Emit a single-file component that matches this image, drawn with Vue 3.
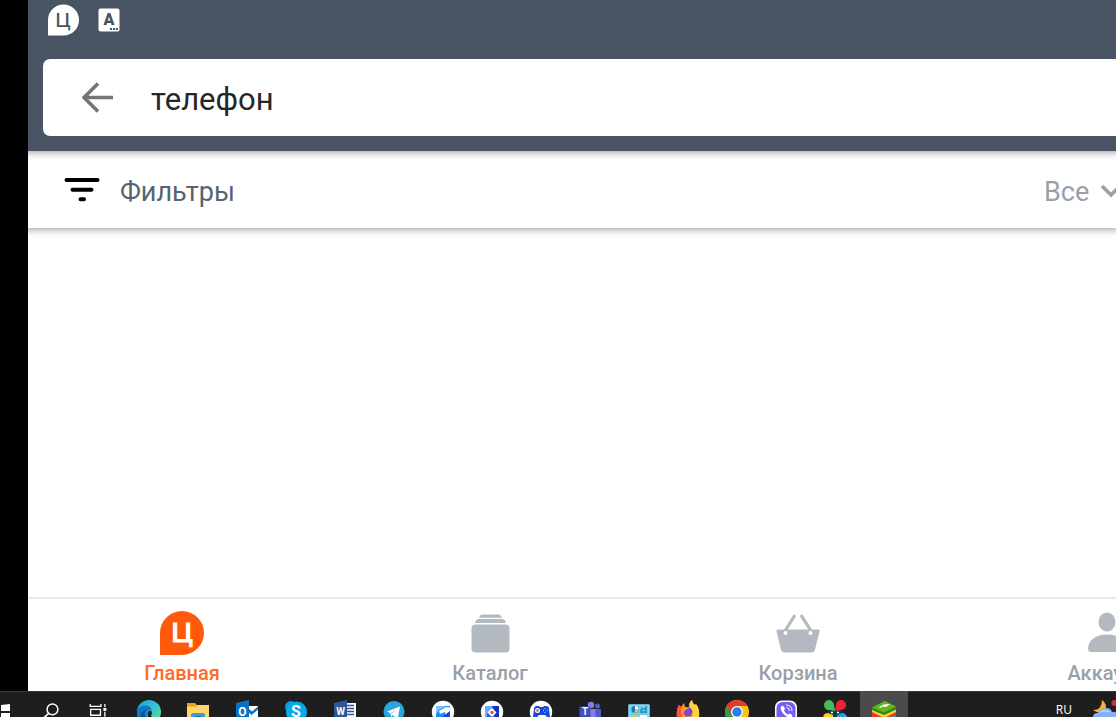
<template>
  <div class="screen">
    <div class="app">
      <header class="app-header">
        <div class="status-bar">
          <svg class="status-logo" viewBox="0 0 32 32" aria-hidden="true">
            <path d="M0 31.500V15.500A15.500 15.500 0 1 1 15.500 31.500Z" fill="#fff" />
            <text class="logo-letter logo-letter-dark" x="15" y="23" font-size="24">ц</text>
          </svg>
          <svg class="status-keyboard" viewBox="0 0 22 24" aria-hidden="true">
            <rect x="0.500" y="0.500" width="21" height="23" rx="2" fill="#fff" />
            <text class="keyboard-letter" x="11" y="17" font-size="16">A</text>
            <path d="M12 21h2m1 0h2m1 0h2" stroke="#485463" stroke-width="2" />
          </svg>
        </div>
        <form class="search" @submit.prevent>
          <button class="back" type="button" aria-label="Назад">
            <svg viewBox="0 0 32 32">
              <path d="M31 15.500H3M16 1.500l-14 14 14 14" fill="none" stroke="#757575" stroke-width="3.600" />
            </svg>
          </button>
          <input v-model="query" class="search-input" type="text" aria-label="Поиск">
        </form>
      </header>

      <div class="filters">
        <button class="filter-button" type="button">
          <svg class="filter-icon" viewBox="0 0 36 26">
            <path d="M2.500 3h31M8.500 12.700h19M16.500 22.300h3.500" fill="none" stroke="#000" stroke-width="4" stroke-linecap="round" />
          </svg>
          <span class="filter-label">Фильтры</span>
        </button>
        <label class="scope">
          <select v-model="scope" class="scope-select" aria-label="Раздел">
            <option>Все</option>
          </select>
          <svg class="scope-arrow" viewBox="0 0 16 16">
            <path d="M2 4l9 9 9-9" fill="none" stroke="#98a1aa" stroke-width="3.600" />
          </svg>
        </label>
      </div>

      <main class="results"></main>

      <nav class="tabs">
        <a v-for="tab in tabs" :key="tab.id" href="#" class="tab" :class="{ active: tab.id === current }" @click.prevent="current = tab.id">
          <svg v-if="tab.id === 'home'" class="tab-icon" viewBox="0 0 44 44">
            <path d="M0 44V22A22 22 0 1 1 22 44Z" fill="#ff5a0c" />
            <text class="logo-letter" x="22" y="31" font-size="34">ц</text>
          </svg>
          <svg v-else-if="tab.id === 'catalog'" class="tab-icon" viewBox="0 0 44 44" fill="#b3b9c1">
            <rect x="3.500" y="13.500" width="38" height="28" rx="4" />
            <path d="M7 12q1-4 4-4h23q3 0 4 4zM11 6.800q1-3.300 4-3.300h15q3 0 4 3.300z" />
          </svg>
          <svg v-else-if="tab.id === 'cart'" class="tab-icon" viewBox="0 0 44 44" fill="#b3b9c1">
            <path d="M19 4L9 20M25 4l10 16" stroke="#b3b9c1" stroke-width="3.200" />
            <path d="M2 18.500h40q2 0 1.500 2L39 38.500q-1 3-3.500 3h-27q-2.500 0-3.500-3L.500 20.500q-.5-2 1.500-2z" />
            <circle cx="9.500" cy="22" r="2" fill="#fff" />
            <circle cx="34.500" cy="22" r="2" fill="#fff" />
          </svg>
          <svg v-else class="tab-icon" viewBox="0 0 44 44" fill="#b3b9c1">
            <ellipse cx="23" cy="11" rx="8.500" ry="9.500" />
            <path d="M4 38C4 29 12 23.500 23 23.500S42 29 42 38q0 3-3 3H7q-3 0-3-3z" />
          </svg>
          <span class="tab-label">{{ tab.label }}</span>
        </a>
      </nav>
    </div>

    <footer class="taskbar">
      <div class="system">
        <button class="task start" type="button" aria-label="Пуск">
          <svg viewBox="0 0 28 26">
            <path d="M1 14l9-1v7H1zM1 22h9v4H1z" fill="#fff" />
          </svg>
        </button>
        <button class="task system-task" type="button" aria-label="Поиск">
          <svg viewBox="0 0 48 26">
            <circle cx="25" cy="18.500" r="5.500" fill="none" stroke="#fff" stroke-width="1.500" />
            <path d="M21 22.500L16.500 27" stroke="#fff" stroke-width="1.800" />
          </svg>
        </button>
        <button class="task system-task" type="button" aria-label="Представление задач">
          <svg viewBox="0 0 48 26" fill="none" stroke="#fff" stroke-width="1.300">
            <path d="M15.500 13v2.500h11V13M16 18.500h10v6H16zM30.500 13v3m0 5v5" />
            <path d="M29 17h3v3h-3z" fill="#fff" stroke="none" />
          </svg>
        </button>
      </div>

      <div class="pinned">
        <button class="task" type="button" aria-label="Edge">
          <svg viewBox="0 0 48 26">
            <defs>
              <linearGradient id="edge-top" x1="0" y1="0" x2="1" y2="1">
                <stop offset="0" stop-color="#199fdc" />
                <stop offset=".5" stop-color="#32c6d5" />
                <stop offset="1" stop-color="#6ce556" />
              </linearGradient>
            </defs>
            <circle cx="24" cy="21" r="12" fill="url(#edge-top)" />
            <path d="M12 20c1-4 5-6 9-5.500 4 .5 6 3 5.500 6-2-2.500-5-1-5 2.500 0 2 1 3 1 4h-9q-2-3-1.500-7z" fill="#1076c6" />
            <path d="M23 26q-1.500-5 1-6t3 1.500q0 2-1 3l1 1.500z" fill="#202020" />
            <path d="M16 26q-1-6 5-7-3 4-.5 7z" fill="#075398" />
          </svg>
        </button>
        <button class="task" type="button" aria-label="Проводник">
          <svg viewBox="0 0 48 26">
            <path d="M13 12h8l2 2h12v12H13z" fill="#e6a31b" />
            <path d="M13 15.500h9l1.500-1.500H35v12H13z" fill="#ffd869" />
            <path d="M17 26v-2q0-2 2-2h10q2 0 2 2v2z" fill="#3c9bdd" />
            <path d="M21 25h6v1h-6z" fill="#246aa3" />
          </svg>
        </button>
        <button class="task" type="button" aria-label="Outlook">
          <svg viewBox="0 0 48 26">
            <path d="M25 15h10v11H25z" fill="#fff" />
            <path d="M25 17l4 3.500 6-5v3L28.500 24 25 21z" fill="#0871c9" />
            <path d="M13 12l13-3v17H13z" fill="#0872c6" />
            <text class="glyph" x="19.500" y="25" font-size="12">O</text>
          </svg>
        </button>
        <button class="task" type="button" aria-label="Skype">
          <svg viewBox="0 0 48 26">
            <circle cx="19" cy="16" r="6" fill="#0a9ee6" />
            <circle cx="24.500" cy="21" r="10.500" fill="#09a9eb" />
            <text class="glyph" x="24" y="26" font-size="16">S</text>
          </svg>
        </button>
        <button class="task" type="button" aria-label="Word">
          <svg viewBox="0 0 48 26">
            <path d="M25 12h10v14H25z" fill="#fff" />
            <path d="M25 14.500h8m-8 3h8m-8 3h8m-8 3h8" stroke="#2b579a" stroke-width="1.300" />
            <path d="M13 12l13-3v17H13z" fill="#2b579a" />
            <text class="glyph" x="19.500" y="24" font-size="10">W</text>
          </svg>
        </button>
        <button class="task" type="button" aria-label="Telegram">
          <svg viewBox="0 0 48 26">
            <circle cx="24" cy="20.500" r="10.500" fill="#2fa3dc" />
            <path d="M17 20.500L30 15.500 28 26h-3l-2.500-2-1 2-1.500-4z" fill="#fff" />
            <path d="M20.500 22l7-4.500-6 6z" fill="#b9dbee" />
          </svg>
        </button>
        <button class="task" type="button" aria-label="Карты">
          <svg viewBox="0 0 48 26">
            <circle cx="24" cy="21" r="11.200" fill="#fff" />
            <rect x="17" y="15" width="14" height="14" rx="1" fill="#248bf2" />
            <path d="M17 15h10l-7 4-3 4z" fill="#80c1ff" />
            <path d="M20 20l7-4 4 .5V20l-4 5-1-4-5 2z" fill="#fff" />
            <path d="M31 20v6h-8z" fill="#1648df" />
          </svg>
        </button>
        <button class="task" type="button" aria-label="Игры">
          <svg viewBox="0 0 48 26">
            <circle cx="24" cy="21" r="11.200" fill="#fff" />
            <rect x="17" y="15" width="14" height="14" rx="1" fill="#2563e8" />
            <path d="M17 15h7v4l-5 4v3h-2z" fill="#67adff" />
            <path d="M25 15h6v11h-4z" fill="#1431b8" />
            <path d="M24 17l4.500 4.500L24 26l-4.500-4.500z" fill="#fff" />
            <circle cx="24" cy="21.500" r="1.700" fill="#ef4938" />
          </svg>
        </button>
        <button class="task" type="button" aria-label="Геймпад">
          <svg viewBox="0 0 48 26">
            <circle cx="24" cy="21" r="11.200" fill="#fff" />
            <path d="M16 26l1-8q0-3 3-3h2l1 1h3l1-1h2q3 0 3 3l1 8h-3l-2-2h-6l-2 2z" fill="#1746dc" />
            <circle cx="20.500" cy="19.500" r="2.500" fill="#fff" />
            <circle cx="20.500" cy="19.500" r="1.300" fill="#ef3f46" />
            <path d="M28 17v1m0 3v1m-2-2.500h1m2.500 0h1" stroke="#85c5ff" stroke-width="1.300" />
          </svg>
        </button>
        <button class="task" type="button" aria-label="Teams">
          <svg viewBox="0 0 48 26">
            <circle cx="25" cy="14" r="3.200" fill="#7b83eb" />
            <circle cx="31.500" cy="15" r="2.500" fill="#5059c9" />
            <path d="M29 18h6v8h-6z" fill="#5059c9" />
            <path d="M21 18h8.500v8H21z" fill="#7b83eb" />
            <rect x="13.500" y="15.500" width="11" height="11" rx="1" fill="#464eb8" />
            <text class="glyph" x="19" y="24" font-size="10">T</text>
          </svg>
        </button>
        <button class="task" type="button" aria-label="Панель управления">
          <svg viewBox="0 0 48 26">
            <path d="M13.500 13.500h21V26h-21z" fill="#69cdf4" />
            <path d="M14 14h20v12H14z" fill="none" stroke="#9ce3fa" />
            <circle cx="20" cy="18.500" r="3.500" fill="#1979bb" />
            <path d="M20 18.500V15a3.500 3.500 0 0 1 3.500 3.500z" fill="#fff" />
            <path d="M20 18.500h3.500a3.500 3.500 0 0 1-4 3.400z" fill="#f6bd32" />
            <path d="M26 18h5m-5 3h5m0-6v7m-5-4v4" stroke="#176c9e" />
            <path d="M16 25h7" stroke="#f6bd32" stroke-width="2" />
            <path d="M25 25h7" stroke="#fff" stroke-width="2" />
          </svg>
        </button>
        <button class="task" type="button" aria-label="Firefox">
          <svg viewBox="0 0 48 26">
            <path d="M13 26q-1-7 2-12l2 2 3-4 1 4h4q-1-4 3-7 0 3 3 5l1-1q4 5 3 13z" fill="#ff9c22" />
            <path d="M26 15q-1-3 2-6 0 3 3 5l1-1q4 5 3 13h-6z" fill="#ffd43b" />
            <path d="M13 26q-1-7 2-12l2 2q3 0 4 2l-2 2-1 6z" fill="#ff513f" />
            <circle cx="24" cy="21" r="4.500" fill="#7b45d8" />
            <path d="M17 17q5-1 8 1-4 0-5 3l-3 3z" fill="#ff9c22" />
          </svg>
        </button>
        <button class="task" type="button" aria-label="Chrome">
          <svg viewBox="0 0 48 26">
            <circle cx="24" cy="21" r="12" fill="#fbc116" />
            <path d="M13.600 15A12 12 0 0 0 19 32l5-6-5-5z" fill="#2c9f48" />
            <path d="M13.600 15A12 12 0 0 1 34.400 15H24l-6 8z" fill="#e33b2e" />
            <circle cx="24" cy="21" r="6" fill="#fff" />
            <circle cx="24" cy="21" r="4.700" fill="#287de8" />
          </svg>
        </button>
        <button class="task" type="button" aria-label="Viber">
          <svg viewBox="0 0 48 26">
            <rect x="13" y="9.500" width="22" height="22" rx="7" fill="#fff" />
            <rect x="14.500" y="11" width="19" height="20" rx="6" fill="#7360f2" />
            <path d="M19 15.500l2-1 2 3-1 2q1 3 4 4l2-1 2.500 2-1 2h-3Q20 24 18.500 17z" fill="#fff" />
            <path d="M24 14q6 0 6 6m-5.500-3.500q3 .5 3 3.500" fill="none" stroke="#fff" stroke-width="1" />
          </svg>
        </button>
        <button class="task" type="button" aria-label="Переводчик">
          <svg viewBox="0 0 48 26">
            <path d="M17 20l7-2 7 2v6H17z" fill="#083d55" />
            <path d="M24 20l-5-1a5 5 0 1 1 4-5z" fill="#43bd59" />
            <path d="M24 20l1-6a5 5 0 1 1 5 5z" fill="#f22031" />
            <path d="M12 26q1-4 5-4l5 2v2z" fill="#ffd11b" />
            <path d="M36 26q-1-4-5-4l-5 2v2z" fill="#3296e3" />
            <path d="M20 21.500h2m4 0h2" stroke="#fff" stroke-width="1.500" />
          </svg>
        </button>
        <button class="task running" type="button" aria-label="BlueStacks">
          <svg viewBox="0 0 48 26">
            <path d="M12 20l12 5 12-5v6H12z" fill="#e83b2d" />
            <path d="M12 18l12 5 12-5v3l-10 5h-4l-10-5z" fill="#f5cf2e" />
            <path d="M12 16.500L25 10l11 5.500v3L24 24l-12-5z" fill="#268a21" />
            <path d="M12 16.500L25 10l11 5.500-12 6z" fill="#66b51e" />
            <path d="M17 17l7-3.500 6-.5-4 3-3-.5-4 2 1.500-2z" fill="#fff" />
            <path d="M31 26l5-2v2z" fill="#1b91d0" />
          </svg>
        </button>
      </div>

      <div class="tray">
        <span class="language">RU</span>
        <svg class="weather" viewBox="0 0 24 26" aria-hidden="true">
          <path d="M10 9q6 4 3 11-5 4-12-1 9 0 9-10z" fill="#f5ae38" />
          <circle cx="22.500" cy="12" r="3" fill="#d63027" />
          <path d="M1 26q0-4 5-4 2-5 8-5 5 0 6 4 4-1 5 2v3z" fill="#86aef3" />
          <path d="M7 22q3-4 8-3 3 1 4 3-6-3-12 0z" fill="#b4d0ff" />
        </svg>
      </div>
    </footer>
  </div>
</template>

<script setup>
import { ref } from 'vue';

const query = ref('телефон');
const scope = ref('Все');
const current = ref('home');

const tabs = [
  { id: 'home', label: 'Главная' },
  { id: 'catalog', label: 'Каталог' },
  { id: 'cart', label: 'Корзина' },
  { id: 'account', label: 'Аккаунт' },
];
</script>

<style>
body { overflow: hidden; background: #000; }
</style>

<style scoped>
.screen {
  display: flex;
  flex-direction: column;
  height: 100vh;
  overflow: hidden;
  font-family: Roboto, "Liberation Sans", sans-serif;
}
.screen *, .screen { box-sizing: border-box; }
svg { display: block; flex: none; }
button {
  margin: 0;
  padding: 0;
  border: none;
  background: transparent;
  font: inherit;
  cursor: pointer;
}

.app {
  flex: 1;
  display: flex;
  flex-direction: column;
  min-height: 0;
  padding-left: 28px;
  background: linear-gradient(to right, #000 28px, #fff 28px);
}
.app-header {
  z-index: 2;
  padding: 4px 0 15px 15px;
  background: #485463;
  box-shadow: 0 -2px 7px 4px rgba(0,0,0,.35);
  clip-path: inset(0 0 -12px 0);
}
.status-bar {
  display: flex;
  align-items: center;
  gap: 18px;
  height: 32px;
  margin-bottom: 23px;
  padding-left: 5px;
}
.status-logo { width: 32px; height: 32px; }
.status-keyboard { width: 22px; height: 24px; }
.logo-letter {
  font-family: "DejaVu Sans", sans-serif;
  text-anchor: middle;
  fill: #fff;
  stroke: #fff;
  stroke-width: 1px;
}
.logo-letter-dark { fill: #485463; stroke: none; }
.keyboard-letter { font-weight: 900; text-anchor: middle; fill: #485463; }
.search {
  display: flex;
  align-items: center;
  gap: 37px;
  height: 77px;
  padding-left: 39px;
  border-radius: 7px 0 0 7px;
  background: #fff;
}
.back svg { width: 32px; height: 32px; }
.search-input {
  flex: 1;
  min-width: 0;
  height: 60px;
  padding: 4px 0 0;
  border: none;
  outline: none;
  background: transparent;
  color: #262626;
  font: 400 31px Roboto, "Liberation Sans", sans-serif;
}

.filters {
  z-index: 1;
  display: flex;
  align-items: center;
  justify-content: space-between;
  height: 77px;
  padding-left: 36px;
  background: #fff;
  box-shadow: 0 -2px 7px 4px rgba(0,0,0,.35);
  clip-path: inset(0 0 -12px 0);
}
.filter-button {
  display: flex;
  align-items: center;
  gap: 20px;
  color: #566373;
  font-size: 27px;
  line-height: 36px;
}
.filter-label { padding-top: 4px; }
.filter-icon { width: 36px; height: 26px; }
.scope { display: flex; align-items: center; color: #98a1aa; }
.scope-select {
  width: 56px;
  height: 40px;
  padding: 4px 0 0;
  border: none;
  outline: none;
  appearance: none;
  background: transparent;
  color: inherit;
  font: 400 27px Roboto, "Liberation Sans", sans-serif;
}
.scope-arrow { width: 16px; height: 16px; }
.results { flex: 1; }

.tabs {
  display: grid;
  grid-auto-flow: column;
  grid-auto-columns: 308px;
  height: 94px;
  overflow: hidden;
  border-top: 2px solid #e9e9e9;
}
.tab {
  display: flex;
  flex-direction: column;
  align-items: center;
  gap: 6px;
  padding-top: 12px;
  color: #98a1aa;
  text-decoration: none;
}
.tab.active { color: #ff6a26; }
.tab-icon { width: 44px; height: 44px; }
.tab-label { font-size: 20px; line-height: 24px; font-weight: 500; }

.taskbar {
  display: flex;
  height: 26px;
  overflow: hidden;
  background: #1e1e1e;
  box-shadow: inset 0 1px #35364c;
}
.system { display: flex; margin-right: 3px; }
.pinned { display: flex; gap: 1px; }
.task { width: 48px; height: 26px; }
.task svg { width: 100%; height: 26px; }
.task.start { width: 28px; }
.task.system-task { width: 47px; }
.task.running { background: #4b4b4b; }
.glyph { font-weight: 700; text-anchor: middle; fill: #fff; }
.tray { display: flex; align-items: center; gap: 20px; margin-left: auto; }
.language {
  padding-top: 11px;
  color: #fff;
  font-family: "Open Sans", "Noto Sans", sans-serif;
  font-size: 12px;
  line-height: 16px;
}
.weather { width: 24px; height: 26px; }
</style>
